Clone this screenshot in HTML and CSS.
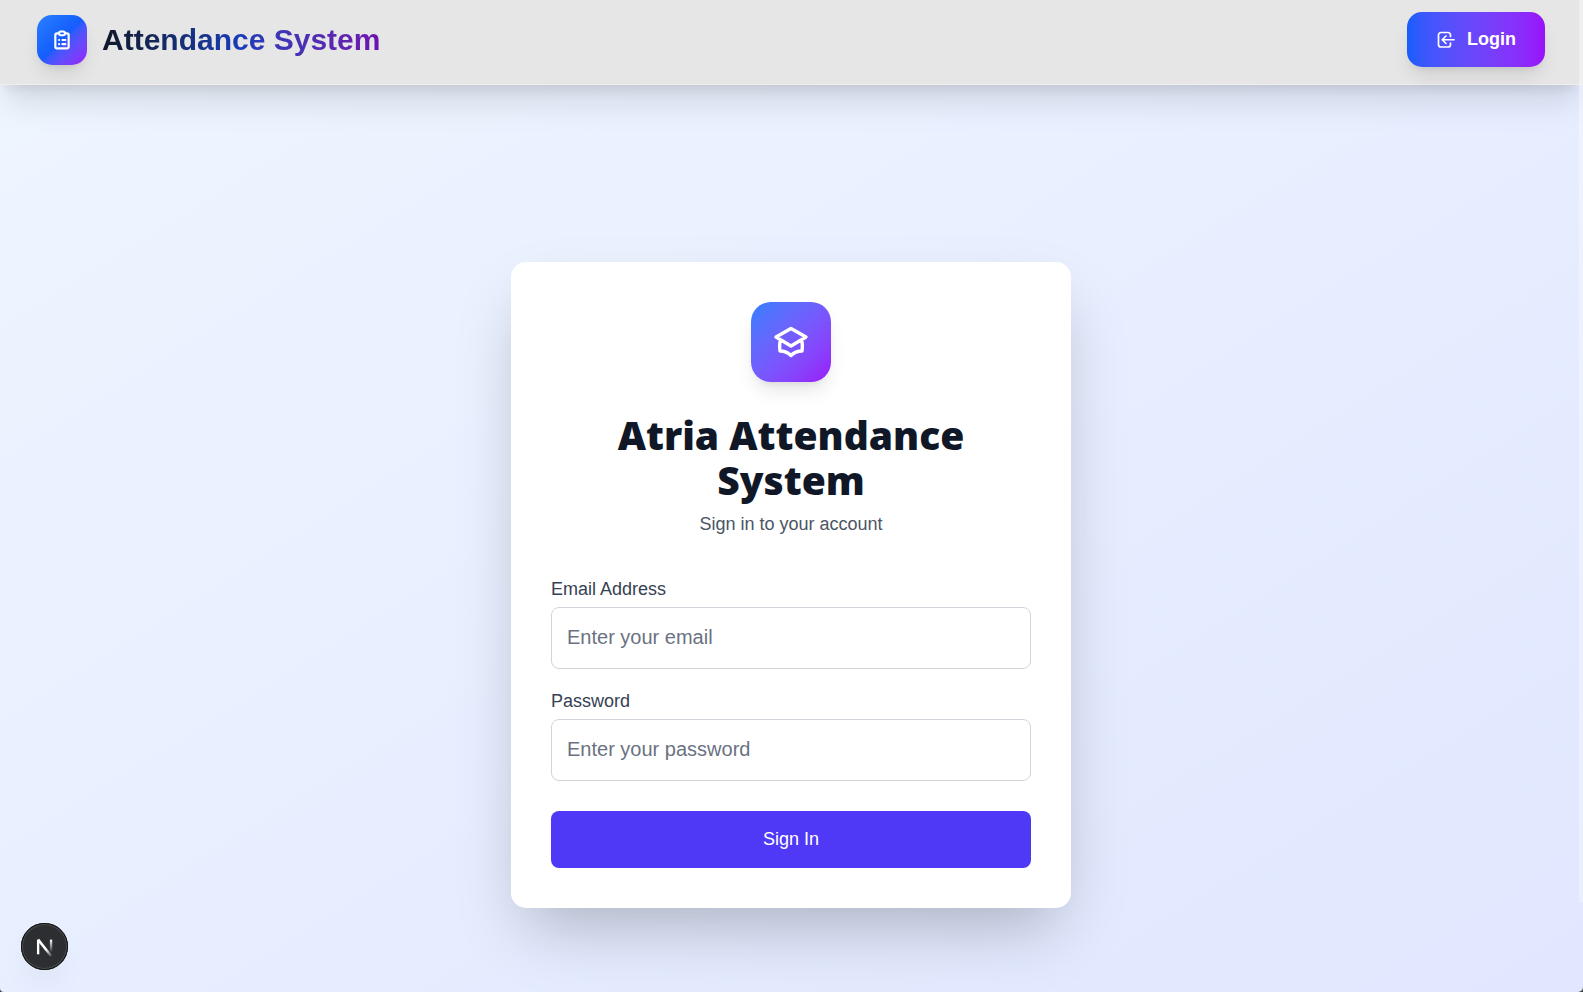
FILE: index.html
```html
<!DOCTYPE html>
<html lang="en">
<head>
<meta charset="utf-8">
<meta name="viewport" content="width=device-width, initial-scale=1">
<title>Attendance System</title>
<link rel="stylesheet" href="styles.css">
</head>
<body>
<header class="topbar">
  <div class="brand">
    <span class="brand-icon">
      <svg viewBox="0 0 24 24" width="20" height="20" fill="none" stroke="currentColor" stroke-width="2.600" stroke-linecap="round" stroke-linejoin="round" aria-hidden="true"><path d="M8 4H6a2 2 0 0 0-2 2v14a2 2 0 0 0 2 2h12a2 2 0 0 0 2-2V6a2 2 0 0 0-2-2h-2"/><rect x="8.500" y="1.800" width="7" height="4.500" rx="2"/><path d="M8.500 12h.01M12.500 12H16M8.500 17h.01M12.500 17H16"/></svg>
    </span>
    <span class="brand-name">Attendance System</span>
  </div>
  <button class="login" type="button">
    <svg viewBox="0 0 18 18" width="18" height="18" fill="none" stroke="currentColor" stroke-width="1.700" stroke-linecap="round" stroke-linejoin="round" aria-hidden="true"><path d="M13.500 5.500V4a2.500 2.500 0 0 0-2.500-2.500H4A2.500 2.500 0 0 0 1.500 4v9.500A2.500 2.500 0 0 0 4 16h7a2.500 2.500 0 0 0 2.500-2.500V12M17 8.750H5.500M9 5 5.250 8.750 9 12.500"/></svg>
    Login
  </button>
</header>
<main class="page">
  <section class="card">
    <div class="card-icon">
      <svg viewBox="0 0 40 40" width="40" height="40" fill="none" stroke="currentColor" stroke-width="3.400" stroke-linejoin="round" stroke-linecap="round" aria-hidden="true"><path d="M20 6.500 35 15 20 24 5 15ZM9.500 18C8.500 21 8.500 25 9 29 13 29 17 30.500 20 33.500 23 30.500 27 29 31 29 31.500 25 31.500 21 30.500 18"/></svg>
    </div>
    <h1 class="title">Atria Attendance System</h1>
    <p class="subtitle">Sign in to your account</p>
    <form class="form">
      <div class="field">
        <label for="email">Email Address</label>
        <input id="email" type="email" placeholder="Enter your email">
      </div>
      <div class="field">
        <label for="password">Password</label>
        <input id="password" type="password" placeholder="Enter your password">
      </div>
      <button class="submit" type="submit">Sign In</button>
    </form>
  </section>
</main>
<button class="dev-badge" type="button" aria-label="Open developer tools">
  <svg viewBox="0 0 48 48" width="47" height="47" fill="none" aria-hidden="true">
    <defs>
      <linearGradient id="diag" x1="17" y1="17" x2="31" y2="34" gradientUnits="userSpaceOnUse"><stop offset=".6" stop-color="#fff"/><stop offset="1" stop-color="#fff" stop-opacity="0.100"/></linearGradient>
      <linearGradient id="stem" x1="0" y1="17" x2="0" y2="30" gradientUnits="userSpaceOnUse"><stop stop-color="#fff"/><stop offset="1" stop-color="#fff" stop-opacity="0"/></linearGradient>
    </defs>
    <path d="M17.500 32V17" stroke="#fff" stroke-width="2.400"/><path d="M17.500 17 31 34" stroke="url(#diag)" stroke-width="2.600"/><path d="M29.500 17h2.400v13h-2.400z" fill="url(#stem)"/>
  </svg>
</button>
<div class="edge" aria-hidden="true"></div>
</body>
</html>
```

FILE: styles.css
```css
* { box-sizing: border-box; }
html { background: #444; }
body {
  margin: 0;
  min-height: 100vh;
  display: flex;
  flex-direction: column;
  border-radius: 0 0 5px 4px;
  font-family: "Liberation Sans", Arial, sans-serif;
  color: #101828;
  background: linear-gradient(to bottom right in oklab, #eff6ff, #e0e7ff);
}
button, input { font-family: inherit; }
.topbar {
  position: relative;
  display: flex;
  align-items: center;
  justify-content: space-between;
  padding: 12px 38px 17px 37px;
  background: #e6e6e6;
  border-bottom: 1px solid #efeff0;
  box-shadow: 0 25px 31px -6px rgba(0, 0, 0, .1), 0 10px 12px -7px rgba(0, 0, 0, .1);
}
.brand { display: flex; align-items: center; gap: 15px; }
.brand-icon {
  width: 50px;
  height: 50px;
  display: grid;
  place-items: center;
  border-radius: 15px;
  color: #fff;
  background: linear-gradient(to bottom right in oklab, #2b7fff, #155dfc 50%, #9810fa);
  box-shadow: 0 12px 19px -4px rgba(0, 0, 0, .1), 0 5px 8px -5px rgba(0, 0, 0, .1);
}
.brand-name {
  font-size: 30px;
  line-height: 40px;
  font-weight: 700;
  color: transparent;
  background: linear-gradient(to right in oklab, #101828, #193cb8 50%, #6e11b0);
  background-clip: text;
  -webkit-background-clip: text;
}
.login {
  display: flex;
  align-items: center;
  gap: 12px;
  height: 55px;
  padding: 0 29px 0 30px;
  border: 0;
  border-radius: 15px;
  color: #fff;
  font-size: 18px;
  font-weight: 700;
  background: linear-gradient(to right in oklab, #155dfc, #9810fa);
  box-shadow: 0 12px 19px -4px rgba(0, 0, 0, .1), 0 5px 8px -5px rgba(0, 0, 0, .1);
}
.page {
  flex: 1;
  display: flex;
  justify-content: center;
  align-items: center;
  padding: 92px 21px 0 20px;
}
.card {
  width: 100%;
  max-width: 560px;
  padding: 40px;
  border-radius: 15px;
  text-align: center;
  background: #fff;
  box-shadow: 0 31px 62px -15px rgba(0, 0, 0, .25);
}
.card-icon {
  width: 80px;
  height: 80px;
  margin: 0 auto 30px;
  display: grid;
  place-items: center;
  border-radius: 20px;
  color: #fff;
  background: linear-gradient(to bottom right in oklab, #2b7fff, #9810fa);
  box-shadow: 0 12px 19px -4px rgba(0, 0, 0, .1), 0 5px 8px -5px rgba(0, 0, 0, .1);
}
.title {
  margin: 0 0 10px;
  font-family: "Open Sans", "Liberation Sans", sans-serif;
  font-size: 39px;
  line-height: 45px;
  font-weight: 800;
}
.subtitle {
  margin: 0 0 40px;
  font-size: 18px;
  line-height: 25px;
  color: #4a5565;
}
.form { display: flex; flex-direction: column; }
.field {
  display: flex;
  flex-direction: column;
  gap: 5px;
  margin-bottom: 20px;
  text-align: left;
}
.field label { font-size: 18px; line-height: 25px; color: #364153; }
.field input {
  width: 100%;
  height: 62px;
  padding: 0 15px;
  border: 1px solid #d1d5dc;
  border-radius: 8px;
  background: #fff;
  color: #101828;
  font-size: 20px;
}
.field input::placeholder { color: #6a7282; opacity: 1; }
.submit {
  height: 57px;
  margin-top: 10px;
  border: 0;
  border-radius: 8px;
  color: #fff;
  font-size: 18px;
  background: #4f39f6;
}
.dev-badge {
  position: fixed;
  left: 21px;
  bottom: 22px;
  width: 47px;
  height: 47px;
  padding: 0;
  display: grid;
  place-items: center;
  border: 0;
  border-radius: 50%;
  background: #2c2e31;
  box-shadow: inset 0 0 0 1px #111, inset 0 0 0 2px #4b4d50, 0 16px 32px -8px rgba(0, 0, 0, .08);
}
.edge {
  position: fixed;
  top: 0;
  right: 0;
  width: 4px;
  height: 902px;
  background: rgba(255, 255, 255, .35);
}
```
